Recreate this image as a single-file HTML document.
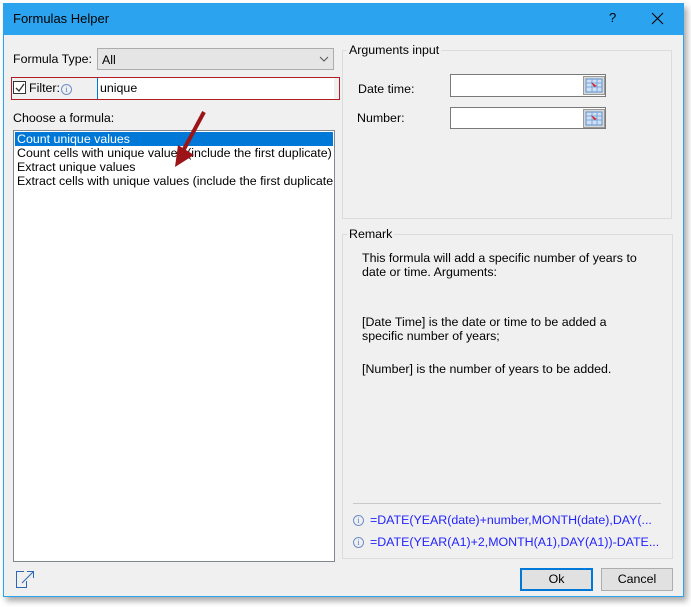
<!DOCTYPE html>
<html><head><meta charset="utf-8"><style>
*{margin:0;padding:0;box-sizing:border-box}
body{width:691px;height:607px;background:#fff;font-family:"Liberation Sans",sans-serif;font-size:12.4px;color:#000;position:relative;overflow:hidden}
.a{position:absolute;white-space:nowrap}
.win{left:3px;top:3px;width:681px;height:594px;background:#f0f0f0;border:1px solid #2ba3ef;box-shadow:3px 4px 6px rgba(0,0,0,.35)}
.title{left:3px;top:3px;width:681px;height:32px;background:#2ba3ef}
.grp{border:1px solid #dcdcdc}
.lbl{background:#f0f0f0;padding:0 2px}
.inp{background:#fff;border:1px solid #7a7a7a}
.btn{background:#e1e1e1;border:1px solid #adadad;text-align:center;line-height:20px}
.blue{color:#2323ff}
.ic{width:11px;height:11px;border:1px solid #6f8fc8;border-radius:50%;font-size:8px;color:#4a7bd0;text-align:center;line-height:9px;font-family:"Liberation Serif",serif}
</style></head><body>
<div class="a win"></div>
<div class="a title"></div>
<div class="a" style="left:13px;top:11px;font-size:13px">Formulas Helper</div>
<div class="a" style="left:609px;top:10px;font-size:13px">?</div>
<svg class="a" style="left:651px;top:12px" width="13" height="13"><path d="M1 1L12 12M12 1L1 12" stroke="#000" stroke-width="1.1"/></svg>

<div class="a" style="left:13px;top:52px">Formula Type:</div>
<div class="a" style="left:97px;top:48px;width:237px;height:22px;background:#e5e5e5;border:1px solid #acacac"></div>
<div class="a" style="left:102px;top:53px">All</div>
<svg class="a" style="left:319px;top:56px" width="10" height="6"><path d="M1 1L5 5L9 1" stroke="#555" fill="none"/></svg>

<div class="a" style="left:11px;top:77px;width:329px;height:23px;border:1px solid #b01e24"></div>
<div class="a" style="left:13px;top:81px;width:13px;height:13px;border:1px solid #333;background:#fff"></div>
<svg class="a" style="left:14px;top:82px" width="12" height="12"><path d="M2 6L5 9L10 2" stroke="#333" fill="none" stroke-width="1.3"/></svg>
<div class="a" style="left:29px;top:81px">Filter:</div>
<div class="a ic" style="left:61px;top:84px">i</div>
<div class="a" style="left:97px;top:78px;width:237px;height:21px;background:#fff;border-left:1px solid #0078d7"></div>
<div class="a" style="left:100px;top:81px">unique</div>

<div class="a" style="left:13px;top:111px">Choose a formula:</div>
<div class="a" style="left:13px;top:130px;width:322px;height:432px;background:#fff;border:1px solid #828790"></div>
<div class="a" style="left:15px;top:132px;width:318px;height:14px;background:#0078d7"></div>
<div class="a" style="left:17px;top:132px;color:#fff;line-height:14px">Count unique values</div>
<div class="a" style="left:17px;top:146px;line-height:14px;width:315px;overflow:hidden">Count cells with unique values (include the first duplicate)</div>
<div class="a" style="left:17px;top:160px;line-height:14px">Extract unique values</div>
<div class="a" style="left:17px;top:174px;line-height:14px;width:316px;overflow:hidden">Extract cells with unique values (include the first duplicate)</div>
<svg class="a" style="left:160px;top:105px" width="60" height="70"><path d="M44 7L23 46" stroke="#9c1418" stroke-width="4"/><path d="M15 62L18 40L34 50Z" fill="#9c1418"/></svg>

<svg class="a" style="left:16px;top:570px" width="19" height="19"><path d="M8 1.5H.5V17.5H10.5V11" stroke="#2c67b3" fill="none"/><path d="M6 13L17 2M11 1.5H17.5V8" stroke="#2c67b3" fill="none"/></svg>

<div class="a grp" style="left:342px;top:50px;width:330px;height:169px"></div>
<div class="a lbl" style="left:347px;top:43px">Arguments input</div>
<div class="a" style="left:358px;top:82px">Date time:</div>
<div class="a inp" style="left:450px;top:74px;width:156px;height:23px"></div>
<div class="a" style="left:357px;top:111px">Number:</div>
<div class="a inp" style="left:450px;top:107px;width:156px;height:22px"></div>
<svg class="a" style="left:583px;top:76px" width="22" height="19"><rect x=".5" y=".5" width="21" height="18" fill="#d8d8d8" stroke="#999"/><rect x="3" y="3" width="16" height="13" fill="#cfe0f5" stroke="#5b8fd0"/><path d="M3 7H19M3 11H19M9 3V16M14 3V16" stroke="#7aa6dc"/><path d="M8 6L14 10L11 11Z" fill="#d42a2a"/></svg>
<svg class="a" style="left:583px;top:109px" width="22" height="19"><rect x=".5" y=".5" width="21" height="18" fill="#d8d8d8" stroke="#999"/><rect x="3" y="3" width="16" height="13" fill="#cfe0f5" stroke="#5b8fd0"/><path d="M3 7H19M3 11H19M9 3V16M14 3V16" stroke="#7aa6dc"/><path d="M8 6L14 10L11 11Z" fill="#d42a2a"/></svg>

<div class="a grp" style="left:342px;top:234px;width:331px;height:325px"></div>
<div class="a lbl" style="left:347px;top:227px">Remark</div>
<div class="a" style="left:362px;top:251px;line-height:14px">This formula will add a specific number of years to<br>date or time. Arguments:</div>
<div class="a" style="left:362px;top:315px;line-height:14px">[Date Time] is the date or time to be added a<br>specific number of years;</div>
<div class="a" style="left:362px;top:362px">[Number] is the number of years to be added.</div>
<div class="a" style="left:353px;top:503px;width:308px;height:1px;background:#c8c8c8"></div>
<div class="a ic" style="left:353px;top:515px">i</div>
<div class="a blue" style="left:370px;top:513px">=DATE(YEAR(date)+number,MONTH(date),DAY(...</div>
<div class="a ic" style="left:353px;top:537px">i</div>
<div class="a blue" style="left:370px;top:535px">=DATE(YEAR(A1)+2,MONTH(A1),DAY(A1))-DATE...</div>

<div class="a btn" style="left:520px;top:568px;width:73px;height:23px;border:2px solid #0078d7;line-height:19px">Ok</div>
<div class="a btn" style="left:601px;top:568px;width:72px;height:23px">Cancel</div>
</body></html>
